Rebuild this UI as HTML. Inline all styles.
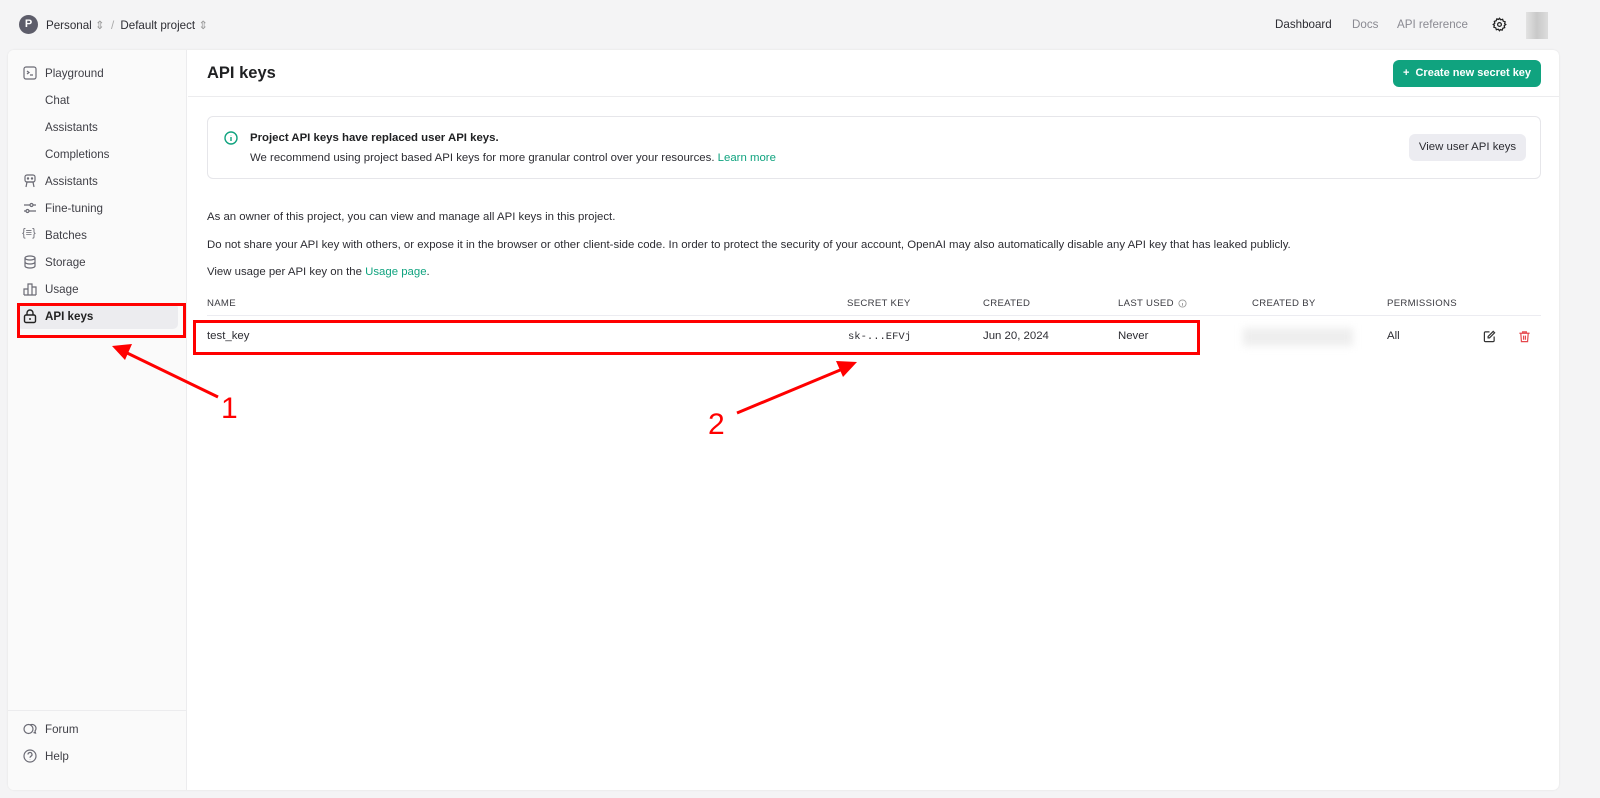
<!DOCTYPE html>
<html><head><meta charset="utf-8"><style>
*{box-sizing:border-box;margin:0;padding:0}
body{width:1600px;height:798px;background:#f4f4f5;font-family:"Liberation Sans",sans-serif;color:#2d2d33;position:relative;overflow:hidden;font-size:11.4px}
.a{position:absolute;white-space:nowrap}
.panel{position:absolute;left:8px;top:50px;width:1551px;height:740px;background:#fff;border-radius:6px;box-shadow:0 0 2px rgba(0,0,0,.08);overflow:hidden}
.side{position:absolute;left:0;top:0;width:179px;height:100%;background:#fafafa;border-right:1px solid #ececee}
.ni{position:absolute;left:37px;font-size:11.6px;color:#3f3f46}
.ic{position:absolute;left:15px;width:14px;height:14px}
.th{font-size:9.6px;color:#3a3a40;letter-spacing:.3px;line-height:12px}
.g{color:#10a37f}
svg{overflow:visible}
</style></head><body>
<div class="a" style="left:19px;top:15px;width:19px;height:19px;border-radius:50%;background:#5d5d6a;color:#fff;font-size:11px;font-weight:bold;text-align:center;line-height:19px">P</div>
<div class="a" style="left:46px;top:18px;font-size:11.6px;color:#2d2d33">Personal <span style="color:#999">⇕</span> <span style="color:#aaa;margin:0 3px">/</span> Default project <span style="color:#999">⇕</span></div>
<div class="a" style="left:1275px;top:18px;font-size:11.6px;color:#2d2d33">Dashboard</div>
<div class="a" style="left:1352px;top:18px;font-size:11.6px;color:#8a8a92">Docs</div>
<div class="a" style="left:1397px;top:18px;font-size:11.6px;color:#8a8a92">API reference</div>
<svg class="a" style="left:1492px;top:17px" width="15" height="15" viewBox="0 0 24 24" fill="none" stroke="#222" stroke-width="2"><circle cx="12" cy="12" r="3"/><path d="M12 2l2 2.5 3-.8 1 3 3 1-.8 3L22 12l-2.5 2 .8 3-3 1-1 3-3-.8L12 22l-2-2.5-3 .8-1-3-3-1 .8-3L2 12l2.5-2-.8-3 3-1 1-3 3 .8z"/></svg>
<div class="a" style="left:1526px;top:12px;width:22px;height:27px;background:linear-gradient(90deg,#e2e2e2,#c9c9c9,#dcdcdc)"></div>

<div class="panel">
 <div class="side">
  <svg class="ic" style="top:16px" viewBox="0 0 14 14" fill="none" stroke="#6b6b75" stroke-width="1.2"><rect x="1" y="1" width="12" height="12" rx="2"/><path d="M4 5l2 1.5L4 8M7 9h3"/></svg>
  <div class="ni" style="top:17px">Playground</div>
  <div class="ni" style="top:44px">Chat</div>
  <div class="ni" style="top:71px">Assistants</div>
  <div class="ni" style="top:98px">Completions</div>
  <svg class="ic" style="top:124px" viewBox="0 0 14 14" fill="none" stroke="#6b6b75" stroke-width="1.2"><rect x="2" y="1" width="10" height="7" rx="2"/><circle cx="5" cy="4.5" r=".6"/><circle cx="9" cy="4.5" r=".6"/><path d="M3 13l1-5h6l1 5"/></svg>
  <div class="ni" style="top:125px">Assistants</div>
  <svg class="ic" style="top:151px" viewBox="0 0 14 14" fill="none" stroke="#6b6b75" stroke-width="1.2"><path d="M1 4h6M10 4h3M1 10h2M6 10h7"/><circle cx="8.5" cy="4" r="1.5"/><circle cx="4.5" cy="10" r="1.5"/></svg>
  <div class="ni" style="top:152px">Fine-tuning</div>
  <div class="a" style="left:14px;top:177px;font-size:11px;color:#6b6b75">{≡}</div>
  <div class="ni" style="top:179px">Batches</div>
  <svg class="ic" style="top:205px" viewBox="0 0 14 14" fill="none" stroke="#6b6b75" stroke-width="1.2"><ellipse cx="7" cy="3" rx="5" ry="2"/><path d="M2 3v8c0 1.1 2.2 2 5 2s5-.9 5-2V3M2 7c0 1.1 2.2 2 5 2s5-.9 5-2"/></svg>
  <div class="ni" style="top:206px">Storage</div>
  <svg class="ic" style="top:232px" viewBox="0 0 14 14" fill="none" stroke="#6b6b75" stroke-width="1.2"><path d="M1 13V7h4v6M5 13V2h4v11M9 13V5h4v8M1 13h12"/></svg>
  <div class="ni" style="top:233px">Usage</div>
  <div class="a" style="left:9px;top:253px;width:161px;height:26px;background:#ececef;border-radius:5px"></div>
  <svg class="ic" style="top:259px" viewBox="0 0 14 14" fill="none" stroke="#222" stroke-width="1.4"><rect x="1.5" y="6" width="11" height="7.5" rx="1.5"/><path d="M4 6V4a3 3 0 016 0v2M7 9v2"/></svg>
  <div class="ni" style="top:260px;color:#222;font-weight:bold">API keys</div>
  <div class="a" style="left:0;top:660px;width:179px;border-top:1px solid #ececee"></div>
  <svg class="ic" style="top:672px" viewBox="0 0 14 14" fill="none" stroke="#6b6b75" stroke-width="1.2"><circle cx="5.5" cy="7" r="4.5"/><path d="M7 3a4 4 0 016 3.5c0 1-.5 2-1 2.5l.5 2-2-.5"/></svg>
  <div class="ni" style="top:673px">Forum</div>
  <svg class="ic" style="top:699px" viewBox="0 0 14 14" fill="none" stroke="#6b6b75" stroke-width="1.2"><circle cx="7" cy="7" r="6"/><path d="M5 5.5a2 2 0 113 1.7c-.7.4-1 .8-1 1.5M7 10.5v.3"/></svg>
  <div class="ni" style="top:700px">Help</div>
 </div>
 <div class="a" style="left:199px;top:14px;font-size:16.5px;font-weight:bold;color:#202123">API keys</div>
 <div class="a" style="left:1385px;top:10px;width:148px;height:27px;background:#10a37f;border-radius:6px;color:#fff;font-size:11px;font-weight:bold;line-height:27px;text-align:center">+&nbsp; Create new secret key</div>
 <div class="a" style="left:180px;top:46px;width:1371px;border-top:1px solid #ececee"></div>
 <div class="a" style="left:199px;top:66px;width:1334px;height:63px;border:1px solid #e6e6ea;border-radius:6px"></div>
 <svg class="a" style="left:216px;top:81px" width="14" height="14" viewBox="0 0 14 14" fill="none" stroke="#10a37f" stroke-width="1.4"><circle cx="7" cy="7" r="6"/><path d="M7 6v4M7 4v.3"/></svg>
 <div class="a" style="left:242px;top:82px;font-weight:bold;color:#202123">Project API keys have replaced user API keys.</div>
 <div class="a" style="left:242px;top:102px;color:#2d2d33">We recommend using project based API keys for more granular control over your resources. <span class="g">Learn more</span></div>
 <div class="a" style="left:1401px;top:84px;width:117px;height:27px;background:#ececf1;border-radius:6px;line-height:27px;text-align:center;color:#2d2d33">View user API keys</div>
 <div class="a" style="left:199px;top:161px">As an owner of this project, you can view and manage all API keys in this project.</div>
 <div class="a" style="left:199px;top:189px">Do not share your API key with others, or expose it in the browser or other client-side code. In order to protect the security of your account, OpenAI may also automatically disable any API key that has leaked publicly.</div>
 <div class="a" style="left:199px;top:216px">View usage per API key on the <span class="g">Usage page</span>.</div>
 <div class="a th" style="left:199px;top:248px">NAME</div>
 <div class="a th" style="left:839px;top:248px">SECRET KEY</div>
 <div class="a th" style="left:975px;top:248px">CREATED</div>
 <div class="a th" style="left:1110px;top:248px">LAST USED</div>
 <svg class="a" style="left:1170px;top:249px" width="9" height="9" viewBox="0 0 10 10" fill="none" stroke="#999" stroke-width="1"><circle cx="5" cy="5" r="4"/><path d="M5 4.5v3M5 3v.2"/></svg>
 <div class="a th" style="left:1244px;top:248px">CREATED BY</div>
 <div class="a th" style="left:1379px;top:248px">PERMISSIONS</div>
 <div class="a" style="left:199px;top:265px;width:1334px;border-top:1px solid #ececf1"></div>
 <div class="a" style="left:199px;top:280px">test_key</div>
 <div class="a" style="left:840px;top:281px;font-family:'Liberation Mono',monospace;font-size:10.5px">sk-...EFVj</div>
 <div class="a" style="left:975px;top:280px">Jun 20, 2024</div>
 <div class="a" style="left:1110px;top:280px">Never</div>
 <div class="a" style="left:1235px;top:278px;width:110px;height:18px;background:#eee;filter:blur(4px)"></div>
 <div class="a" style="left:1379px;top:280px">All</div>
 <svg class="a" style="left:1475px;top:280px" width="13" height="13" viewBox="0 0 14 14" fill="none" stroke="#333" stroke-width="1.3"><path d="M7 2H2.5A1 1 0 001.5 3v8.5a1 1 0 001 1H11a1 1 0 001-1V7"/><path d="M11 1.5l1.5 1.5L7 8.5H5.5V7z"/></svg>
 <svg class="a" style="left:1510px;top:280px" width="13" height="13" viewBox="0 0 14 14" fill="none" stroke="#e5484d" stroke-width="1.3"><path d="M1.5 3.5h11M5 3.5V2h4v1.5M3 3.5l.7 9h6.6l.7-9M6 6v4.5M8 6v4.5"/></svg>
</div>
<div class="a" style="left:17px;top:303px;width:169px;height:35px;border:3px solid #f00"></div>
<div class="a" style="left:193px;top:320px;width:1007px;height:35px;border:3px solid #f00"></div>
<svg class="a" style="left:0;top:0" width="1600" height="798">
 <g stroke="#f00" stroke-width="3" fill="#f00">
  <line x1="218" y1="397" x2="125" y2="352"/>
  <polygon points="112,346 132,344 125,360" stroke="none"/>
  <line x1="737" y1="413" x2="845" y2="368"/>
  <polygon points="857,362 836,361 843,377" stroke="none"/>
 </g>
 <text x="221" y="418" font-family="Liberation Sans" font-size="30" fill="#f00">1</text>
 <text x="708" y="434" font-family="Liberation Sans" font-size="30" fill="#f00">2</text>
</svg>
</body></html>
